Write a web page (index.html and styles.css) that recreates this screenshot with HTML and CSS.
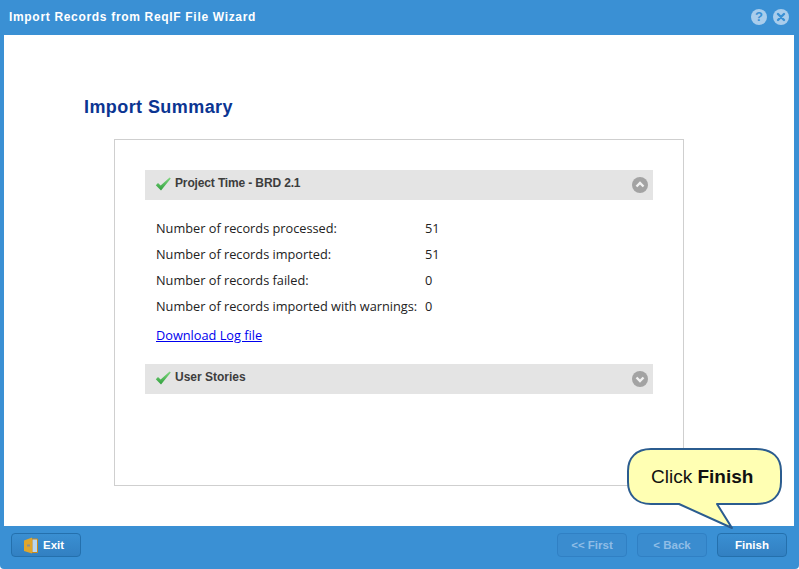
FILE: index.html
```html
<!DOCTYPE html>
<html lang="en">
<head>
<meta charset="utf-8">
<title>Import Records from ReqIF File Wizard</title>
<link rel="stylesheet" href="styles.css">
</head>
<body>
<div class="window">
  <header class="titlebar">
    <span class="title">Import Records from ReqIF File Wizard</span>
    <div class="win-icons">
      <span class="win-icon">?</span>
      <svg class="win-close" width="16" height="16" viewBox="0 0 16 16"><circle cx="8" cy="8" r="8" fill="#a9cdec"/><path d="M5 5l6 6M11 5l-6 6" stroke="#3a90d4" stroke-width="2.4" stroke-linecap="round"/></svg>
    </div>
  </header>
  <main class="content">
    <h1 class="heading">Import Summary</h1>
    <section class="panel">
      <div class="section-head">
        <svg class="check" width="16" height="14" viewBox="0 0 16 14"><defs><linearGradient id="g" x1="0" y1="0" x2="0" y2="1"><stop offset="0" stop-color="#7fd77f"/><stop offset="1" stop-color="#2f9f3c"/></linearGradient></defs><path d="M.8 8.200L3 6 5.600 8.400 14.600.4 15.800 1.600 6 13.600z" fill="url(#g)"/></svg>
        <span class="section-title tight">Project Time - BRD 2.1</span>
        <svg class="toggle" width="16" height="16" viewBox="0 0 16 16"><circle cx="8" cy="8" r="8" fill="#a3a3a3"/><path d="M4.500 9.500L8 6l3.500 3.500" fill="none" stroke="#f2f2f2" stroke-width="2.400"/></svg>
      </div>
      <div class="rows">
        <div class="row"><span class="label">Number of records processed:</span><span>51</span></div>
        <div class="row"><span class="label">Number of records imported:</span><span>51</span></div>
        <div class="row"><span class="label">Number of records failed:</span><span>0</span></div>
        <div class="row"><span class="label">Number of records imported with warnings:</span><span>0</span></div>
      </div>
      <a class="log-link" href="#">Download Log file</a>
      <div class="section-head second">
        <svg class="check" width="16" height="14" viewBox="0 0 16 14"><path d="M.8 8.200L3 6 5.600 8.400 14.600.4 15.800 1.600 6 13.600z" fill="url(#g)"/></svg>
        <span class="section-title">User Stories</span>
        <svg class="toggle" width="16" height="16" viewBox="0 0 16 16"><circle cx="8" cy="8" r="8" fill="#a3a3a3"/><path d="M4.500 6.500L8 10l3.500-3.500" fill="none" stroke="#f2f2f2" stroke-width="2.400"/></svg>
      </div>
    </section>
  </main>
  <footer class="footer">
    <button class="btn exit">
      <svg class="door" width="14" height="17" viewBox="0 0 14 17"><path d="M8 2h5.500v13.500H8z" fill="#b9d7f2" stroke="#c98a1e"/><path d="M0 3.500L8 .5v16l-8-2.500z" fill="#e0a62c"/><rect x="3" y="7.500" width="3" height="2" fill="#8a8f96"/></svg>
      Exit
    </button>
    <div class="nav">
      <button class="btn off">&lt;&lt; First</button>
      <button class="btn off">&lt; Back</button>
      <button class="btn">Finish</button>
    </div>
  </footer>
  <div class="callout">
    <svg class="callout-shape" width="157" height="84" viewBox="0 0 157 84"><path d="M24 1H129C146 1 154 10 154 23V34C154 47 146 56 129 56H90L105 80L52 56H24C9 56 1 47 1 34V23C1 10 9 1 24 1Z" fill="#ffffb3" stroke="#2b5c8f" stroke-width="2" stroke-linejoin="round"/></svg>
    <span class="callout-text">Click <b>Finish</b></span>
  </div>
</div>
</body>
</html>
```

FILE: styles.css
```css
* { box-sizing: border-box; }
html, body { margin: 0; height: 100%; background: #fff; }
.window {
  position: relative;
  width: 799px;
  height: 569px;
  display: flex;
  flex-direction: column;
  background: #3a90d4;
  border-radius: 0 0 4px 4px;
  overflow: hidden;
}
.titlebar {
  height: 35px;
  flex: none;
  display: flex;
  align-items: center;
  justify-content: space-between;
  padding: 0 10px 1px 9px;
}
.title {
  font: bold 12px "Liberation Sans", sans-serif;
  letter-spacing: .68px;
  color: #fff;
}
.win-icons { display: flex; gap: 6px; align-items: center; }
.win-icon {
  width: 16px;
  height: 16px;
  border-radius: 50%;
  background: #a9cdec;
  color: #3a90d4;
  font: bold 13px/16px "Liberation Sans", sans-serif;
  text-align: center;
}
.win-close { display: block; }
.content {
  flex: none;
  height: 491px;
  margin: 0 5px 0 4px;
  background: #fff;
  padding: 60px 0 0 80px;
}
.heading {
  margin: 0 0 20px;
  height: 24px;
  font: bold 18px/24px "Liberation Sans", sans-serif;
  letter-spacing: .42px;
  color: #0b3592;
}
.panel {
  width: 570px;
  height: 347px;
  margin-left: 30px;
  border: 1px solid #cfcfcf;
  padding: 30px 30px 0;
}
.section-head {
  height: 30px;
  width: 508px;
  display: flex;
  align-items: center;
  background: #e4e4e4;
  padding: 0 5px 0 10px;
}
.check { flex: none; margin: -3px 4px 0 0; display: block; }
.section-title {
  flex: 1;
  margin-top: -5px;
  font: bold 12px "Liberation Sans", sans-serif;
  color: #3d3d3d;
}
.section-title.tight { letter-spacing: -.14px; }
.toggle { flex: none; display: block; }
.rows {
  padding: 15px 0 0 11px;
  font: 12.750px/26px "Open Sans", sans-serif;
  color: #222;
}
.row { display: flex; height: 26px; }
.label { width: 269px; flex: none; }
.log-link {
  display: block;
  margin: 3px 0 16px 11px;
  height: 26px;
  font: 12.750px/26px "Open Sans", sans-serif;
  color: #0000ee;
  text-decoration: underline;
}
.footer {
  flex: 1;
  display: flex;
  justify-content: space-between;
  padding: 7px 12px 0 11px;
}
.nav { display: flex; gap: 10px; }
.btn {
  width: 70px;
  height: 24px;
  padding: 0;
  display: flex;
  align-items: center;
  justify-content: center;
  gap: 5px;
  background: linear-gradient(#3a8fd2, #3280c2);
  border: 1px solid #2470ad;
  border-radius: 4px;
  font: bold 11.500px "Liberation Sans", sans-serif;
  color: #fff;
}
.btn.exit { justify-content: flex-start; padding-left: 12px; }
.btn.off {
  background: #3a8ccf;
  border-color: #3080c4;
  color: #8fbde6;
}
.door { display: block; }
.callout {
  position: absolute;
  left: 627px;
  top: 448px;
  width: 157px;
  height: 84px;
}
.callout-shape { display: block; }
.callout-text {
  position: absolute;
  left: 24px;
  top: 17px;
  font: 19px/24px "Liberation Sans", sans-serif;
  color: #111;
  white-space: nowrap;
}
```
